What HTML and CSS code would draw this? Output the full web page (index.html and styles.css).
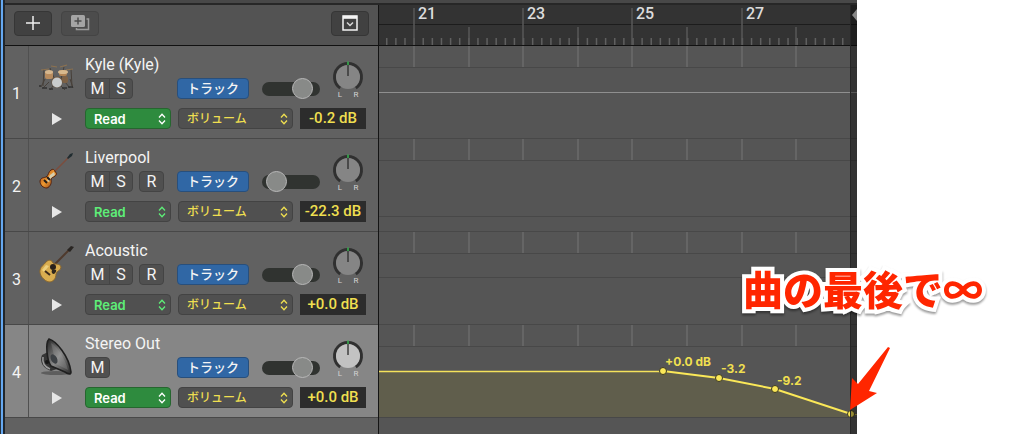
FILE: index.html
```
<!DOCTYPE html>
<html lang="ja">
<head>
  <meta charset="UTF-8" />
  <meta name="viewport" content="width=device-width, initial-scale=1.0"/>
  <title>Tracks</title>
  <link rel="stylesheet" href="styles.css">
</head>
<body>
  <svg class="defs" aria-hidden="true">
    <defs>
      <symbol id="updown" viewBox="0 0 8 12"><path d="M1 4.5 4 1.3 7 4.5M1 7.5 4 10.7 7 7.5" fill="none" stroke="currentColor" stroke-width="1.3"/></symbol>
      <symbol id="knob" viewBox="0 0 32 40">
        <path d="M8.200 28A13.500 13.500 0 1 1 23.800 28" fill="none" stroke="#303030" stroke-width="3"/>
        <circle cx="16" cy="17" r="12" fill="currentColor"/>
        <path d="M16 5v11" stroke="#2b2b2b" stroke-width="1.300"/>
        <path d="M16 1.500v3.500" stroke="#36b14e" stroke-width="1.600"/>
      </symbol>
      <symbol id="bars" viewBox="0 0 479 22">
        <path d="M35 0V22M90 0V22M144 0V22M199 0V22M253 0V22M308 0V22M363 0V22M417 0V22" stroke="#6b6b6b" stroke-width="1.500"/>
      </symbol>
      <linearGradient id="cone" x2="1" y2="1"><stop offset="0" stop-color="#222"/><stop offset=".5" stop-color="#8a8a8a"/><stop offset="1" stop-color="#292929"/></linearGradient>
      <linearGradient id="burst" x2="1" y2="1"><stop offset="0" stop-color="#8d3211"/><stop offset=".5" stop-color="#f09a30"/><stop offset="1" stop-color="#6e250e"/></linearGradient>
    </defs>
  </svg>

  <div class="window">
    <div class="topbar"></div>
    <div class="panes">
      <section class="headers">
        <div class="toolbar">
          <button class="tool" aria-label="Add track"><svg width="16" height="16"><path d="M8 1v14M1 8h14" stroke="#f0f0f0" stroke-width="1.500"/></svg></button>
          <button class="tool dim" aria-label="Duplicate track"><svg width="20" height="16"><path d="M16.500 4H18.500V14.500H6.500V13" fill="none" stroke="#9a9a9a" stroke-width="1.500"/><rect x="1" y="0" width="14" height="12" rx="1.500" fill="#a4a4a4"/><path d="M8 2.500v7M4.500 6h7" stroke="#4c4c4c" stroke-width="1.500"/></svg></button>
          <button class="tool config" aria-label="Header options"><svg width="16" height="16"><path d="M1 1h14v14H1z" fill="none" stroke="#f4f4f4" stroke-width="1.500"/><path d="M1 2.300h14" stroke="#f4f4f4" stroke-width="3"/><path d="M5 7.500l3 3 3-3" fill="none" stroke="#d8d8d8" stroke-width="1.500"/></svg></button>
        </div>

        <article class="track">
          <div class="num">1</div>
          <div class="side">
            <svg class="instrument" width="40" height="40" viewBox="0 0 40 40">
              <g stroke="#474039" stroke-width="1" fill="none"><path d="M7 10l-1 17M34 10l1 17M13 9l5 12M27 8l-3 12M8 20l-4 8M33 20l3 9M12 23l-6 6M28 23l5 6M16 27l-3 4M24 27l4 4"/></g>
              <path d="M4 11l8-1M14 7l6 1M23 8l7-2M29 11l7-1" stroke="#8d7250" stroke-width="1.200"/>
              <rect x="8" y="12" width="8" height="8" rx="2" fill="#b78b5e"/><ellipse cx="12" cy="13" rx="4" ry="2" fill="#d5b68d"/>
              <rect x="22" y="11" width="8" height="6" rx="2" fill="#b28454"/><ellipse cx="26" cy="13" rx="5" ry="2" fill="#d8b98d"/>
              <rect x="25" y="17" width="6" height="7" rx="2" fill="#7d6145"/>
              <circle cx="20" cy="23" r="5.500" fill="#70573d"/><circle cx="20" cy="23.500" r="5" fill="#c9cccd"/>
              <path d="M2 27h2M5 29h5M12 30h4M25 29h5M31 28h5" stroke="#323232" stroke-width="1.500"/>
            </svg>
            <button class="disclose" aria-label="Show lanes"></button>
          </div>
          <div class="body">
            <div class="upper">
              <div>
                <h2>Kyle (Kyle)</h2>
                <div class="line">
                  <div class="flags"><span class="pair"><button>M</button><button>S</button></span></div>
                  <button class="mode">トラック</button>
                  <input class="volume" type="range" min="0" max="100" value="82" aria-label="Volume">
                </div>
              </div>
              <div class="pan"><svg width="32" height="40" role="img" aria-label="Pan"><use href="#knob"/></svg><span>L</span><span>R</span></div>
            </div>
            <div class="line auto">
              <span class="pick read on"><select aria-label="Automation"><option>Read</option></select><svg width="8" height="12"><use href="#updown"/></svg></span>
              <span class="pick param"><select aria-label="Parameter"><option>ボリューム</option></select><svg width="8" height="12"><use href="#updown"/></svg></span>
              <output>-0.2 dB</output>
            </div>
          </div>
        </article>

        <article class="track">
          <div class="num">2</div>
          <div class="side">
            <svg class="instrument" width="40" height="40" viewBox="0 0 40 40">
              <path d="M14 23L32 5" stroke="#7c4d3d" stroke-width="1.500"/>
              <path d="M30 6l3-4 3-1-1 3-4 3z" fill="#202c30"/>
              <path d="M14 18c3-2 4 1 4 2 2 0 2 3 0 4-2 2-4 1-4 4 1 3-1 7-4 8-4 0-7-3-7-7 1-4 4-3 6-4 3-2 2-5 5-7z" fill="url(#burst)" stroke="#54220f"/>
              <path d="M13 23l4-3 1 3-4 3-2 4-2-1 2-4z" fill="#d4ceb0"/>
              <path d="M7 28l3 3M10 25l3 3" stroke="#241c18" stroke-width="2"/>
            </svg>
            <button class="disclose" aria-label="Show lanes"></button>
          </div>
          <div class="body">
            <div class="upper">
              <div>
                <h2>Liverpool</h2>
                <div class="line">
                  <div class="flags"><span class="pair"><button>M</button><button>S</button></span><span class="pair"><button>R</button></span></div>
                  <button class="mode">トラック</button>
                  <input class="volume" type="range" min="0" max="100" value="10" aria-label="Volume">
                </div>
              </div>
              <div class="pan"><svg width="32" height="40" role="img" aria-label="Pan"><use href="#knob"/></svg><span>L</span><span>R</span></div>
            </div>
            <div class="line auto">
              <span class="pick read"><select aria-label="Automation"><option>Read</option></select><svg width="8" height="12"><use href="#updown"/></svg></span>
              <span class="pick param"><select aria-label="Parameter"><option>ボリューム</option></select><svg width="8" height="12"><use href="#updown"/></svg></span>
              <output>-22.3 dB</output>
            </div>
          </div>
        </article>

        <article class="track">
          <div class="num">3</div>
          <div class="side">
            <svg class="instrument" width="40" height="40" viewBox="0 0 40 40">
              <path d="M14 23L33 4" stroke="#4f3a2d" stroke-width="2"/>
              <path d="M30 5l4-4 3 1-4 5z" fill="#292522"/>
              <path d="M9 17C12 14 15 15 16 18 18 20 23 18 24 22 24 26 20 25 19 29 19 34 16 37 12 37 7 36 2 30 3 25 4 21 7 20 9 17z" fill="#d9ad50" stroke="#8b682f"/>
              <path d="M5 25l4-5 3 1-5 6z" fill="#edd07e"/>
              <circle cx="16" cy="22" r="3" fill="#2a211a"/>
              <path d="M17 25c3-1 3 2 0 4-2 0-3-2-2-4z" fill="#2e261d"/>
              <path d="M8 26l5 4" stroke="#3c2a1b" stroke-width="2"/>
            </svg>
            <button class="disclose" aria-label="Show lanes"></button>
          </div>
          <div class="body">
            <div class="upper">
              <div>
                <h2>Acoustic</h2>
                <div class="line">
                  <div class="flags"><span class="pair"><button>M</button><button>S</button></span><span class="pair"><button>R</button></span></div>
                  <button class="mode">トラック</button>
                  <input class="volume" type="range" min="0" max="100" value="82" aria-label="Volume">
                </div>
              </div>
              <div class="pan"><svg width="32" height="40" role="img" aria-label="Pan"><use href="#knob"/></svg><span>L</span><span>R</span></div>
            </div>
            <div class="line auto">
              <span class="pick read"><select aria-label="Automation"><option>Read</option></select><svg width="8" height="12"><use href="#updown"/></svg></span>
              <span class="pick param"><select aria-label="Parameter"><option>ボリューム</option></select><svg width="8" height="12"><use href="#updown"/></svg></span>
              <output>+0.0 dB</output>
            </div>
          </div>
        </article>

        <article class="track selected">
          <div class="num">4</div>
          <div class="side">
            <svg class="instrument" width="40" height="40" viewBox="0 0 40 40">
              <ellipse cx="19" cy="35" rx="15" ry="2" fill="#000" opacity=".3"/>
              <path d="M5 17L11 14 20 31 14 33C6 30 2 24 5 17z" fill="#363636"/>
              <path d="M6 19c-1 6 2 10 7 12" fill="none" stroke="#9b9b9b" stroke-width="1.500"/>
              <path d="M12 1C19 3 32 18 34 34 34 37 31 36 28 34L14 28C10 23 8 5 12 1z" fill="url(#cone)" stroke="#202020" stroke-width="1.600"/>
              <path d="M14 5C20 8 28 20 31 32L19 26z" fill="#aaa" opacity=".25"/>
              <ellipse cx="17" cy="21" rx="3" ry="5" transform="rotate(-28 17 21)" fill="#3d4145"/>
              <circle cx="10" cy="24" r="2" fill="#151515"/>
            </svg>
            <button class="disclose" aria-label="Show lanes"></button>
          </div>
          <div class="body">
            <div class="upper">
              <div>
                <h2>Stereo Out</h2>
                <div class="line">
                  <div class="flags"><span class="pair"><button>M</button></span></div>
                  <button class="mode">トラック</button>
                  <input class="volume" type="range" min="0" max="100" value="82" aria-label="Volume">
                </div>
              </div>
              <div class="pan"><svg width="32" height="40" role="img" aria-label="Pan"><use href="#knob"/></svg><span>L</span><span>R</span></div>
            </div>
            <div class="line auto">
              <span class="pick read on"><select aria-label="Automation"><option>Read</option></select><svg width="8" height="12"><use href="#updown"/></svg></span>
              <span class="pick param"><select aria-label="Parameter"><option>ボリューム</option></select><svg width="8" height="12"><use href="#updown"/></svg></span>
              <output>+0.0 dB</output>
            </div>
          </div>
        </article>
      </section>

      <section class="timeline">
        <div class="ruler">
          <svg width="479" height="40">
            <path d="M0 19.500H479" stroke="#1c1c1c"/>
            <path d="M7 36.500H466" stroke="#606060" stroke-width="7" stroke-dasharray="1.500 7.620"/>
            <path d="M35 3V40M144 3V40M253 3V40M363 3V40" stroke="#585858" stroke-width="1.500"/>
            <path d="M90 22V40M199 22V40M308 22V40M417 22V40" stroke="#585858" stroke-width="1.500"/>
            <text x="39" y="14">21</text>
            <text x="148" y="14">23</text>
            <text x="257" y="14">25</text>
            <text x="367" y="14">27</text>
          </svg>
        </div>
        <div class="lane"><svg width="479" height="92"><use href="#bars" width="479" height="22"/><path d="M0 21.500H479" stroke="#484848"/><path d="M0 46.500H479" stroke="#8f8f8f"/></svg></div>
        <div class="lane"><svg width="479" height="92"><use href="#bars" width="479" height="22"/><path d="M0 21.500H479M0 77.500H479" stroke="#484848"/></svg></div>
        <div class="lane"><svg width="479" height="92"><use href="#bars" width="479" height="22"/><path d="M0 21.500H479M0 45.500H479" stroke="#484848"/></svg></div>
        <div class="lane">
          <svg width="479" height="92">
            <use href="#bars" width="479" height="22"/>
            <path d="M0 21.500H479" stroke="#484848"/>
            <path d="M0 46H284L340 53 396 64 472 89V92H0z" fill="#605e4c"/>
            <path d="M0 46.500H284" stroke="#f5e35b" stroke-width="1.300"/>
            <path d="M284 46L340 53 396 64 472 89" fill="none" stroke="#fbe858" stroke-width="2"/>
            <path d="M472 89.500h7" stroke="#b5a94c"/>
            <g fill="#fbe858" stroke="#3a3820"><circle cx="284" cy="46" r="3.500"/><circle cx="340" cy="53" r="3.500"/><circle cx="396" cy="64" r="3.500"/><circle cx="472" cy="89" r="3.500"/></g>
            <text x="286" y="41">+0.0 dB</text>
            <text x="342" y="48">-3.2</text>
            <text x="398" y="60">-9.2</text>
          </svg>
        </div>
        <div class="song-end"><svg width="6" height="12"><path d="M6 0L1 6l5 6z" fill="#888"/></svg></div>
      </section>
    </div>
  </div>

  <p class="note">曲の最後で∞</p>
  <svg class="arrow" width="44" height="68"><path d="M2 65L4 33 10 39 40 2 42 3 21 46 29 48z" fill="#ff2600"/></svg>
</body>
</html>
```
FILE: styles.css
```
:root {
  --panel: #616161;
  --line: #484848;
  --yellow: #efdf50;
}
* {
  box-sizing: border-box;
}
body {
  margin: 0;
  background: #fff;
  color: #f4f4f4;
  font-family: Roboto, "Noto Sans CJK JP", sans-serif;
  position: relative;
  overflow: hidden;
}
button, select, input {
  font: inherit;
  color: inherit;
  margin: 0;
  padding: 0;
  border: none;
}
svg {
  display: block;
}
.defs {
  position: absolute;
  width: 0;
  height: 0;
}
.window {
  display: flex;
  flex-direction: column;
  min-height: 100vh;
  margin-right: 167px;
  padding-left: 5px;
  background: linear-gradient(to right, #26323e 1px, #66a9f2 1px, #66a9f2 3px, #20262c 3px, #20262c 5px, var(--panel) 5px);
}
.topbar {
  height: 5px;
  background: #484848;
  border-bottom: 2px solid #272727;
}
.panes {
  flex: 1;
  display: flex;
}
.headers {
  flex: 0 0 374px;
  background: var(--panel);
  border-right: 1px solid #141414;
}
.toolbar {
  display: flex;
  align-items: center;
  gap: 9px;
  height: 41px;
  padding: 0 9px 4px;
  background: #535353;
  border-bottom: 1px solid #111;
}
.tool {
  display: flex;
  align-items: center;
  justify-content: center;
  width: 38px;
  height: 25px;
  background: #414141;
  border: 1px solid #363636;
  border-radius: 4px;
}
.tool.dim {
  background: #4c4c4c;
  border-color: #444;
}
.config {
  margin-left: auto;
}

/* track headers */
.track {
  display: flex;
  height: 93px;
  border-bottom: 1px solid var(--line);
}
.track.selected {
  background: #868686;
}
.num {
  flex: 0 0 24px;
  display: flex;
  align-items: center;
  justify-content: center;
  padding-top: 2px;
  border-right: 1px solid #505050;
  font-size: 16px;
}
.side {
  flex: 0 0 56px;
  display: flex;
  flex-direction: column;
  align-items: center;
  justify-content: space-between;
  padding: 13px 0;
}
.disclose {
  width: 10px;
  height: 12px;
  background: #e6e6e6;
  clip-path: polygon(0 0, 100% 50%, 0 100%);
}
.body {
  flex: 1;
  padding-top: 8px;
}
.upper {
  display: flex;
  gap: 12px;
}
h2 {
  margin: 0 0 2px;
  font-size: 16px;
  font-weight: 400;
  line-height: 22px;
}
.line {
  display: flex;
  align-items: center;
}
.flags {
  display: flex;
  gap: 6px;
  width: 92px;
}
.pair {
  display: flex;
  height: 21px;
  background: #505050;
  border: 1px solid #444;
  border-radius: 4px;
}
.pair button {
  width: 23px;
  background: none;
  font-size: 16px;
  line-height: 19px;
}
.pair button + button {
  border-left: 1px solid #444;
}
.mode {
  width: 72px;
  height: 21px;
  margin-right: 13px;
  background: #3067a5;
  border: 1px solid #284f7c;
  border-radius: 4px;
  font-size: 13px;
  font-weight: 500;
  line-height: 19px;
}
.volume {
  appearance: none;
  width: 58px;
  height: 14px;
  background: #303330;
  border-radius: 7px;
}
.volume::-webkit-slider-thumb {
  appearance: none;
  width: 21px;
  height: 21px;
  background: #888a88;
  border: 1px solid #b8b8b8;
  border-radius: 50%;
}
.pan {
  display: grid;
  grid-template-columns: 1fr 1fr;
  justify-items: center;
  align-content: start;
  width: 32px;
  padding-top: 6px;
  color: #d2d2d2;
  font-size: 8px;
  line-height: 10px;
}
.pan svg {
  grid-column: 1 / 3;
  height: 40px;
  margin-bottom: -10px;
  color: #858585;
}
.selected .pan svg {
  color: #c2c2c2;
}
.auto {
  gap: 7px;
  margin-top: 8px;
  font-size: 13px;
}
.pick {
  position: relative;
  color: #5eee78;
}
.pick select {
  appearance: none;
  display: block;
  width: 100%;
  height: 21px;
  padding: 0 8px;
  background: #505050;
  border: 1px solid #434343;
  border-radius: 4px;
}
.pick svg {
  position: absolute;
  right: 5px;
  top: 5px;
  pointer-events: none;
}
.read {
  width: 86px;
  font-family: Inter, sans-serif;
  font-weight: 600;
}
.read.on {
  color: #fff;
}
.read.on select {
  background: #2e8b3e;
  border-color: #26662f;
}
.param {
  width: 115px;
  color: var(--yellow);
  font-size: 12px;
  font-weight: 500;
}
output {
  width: 66px;
  height: 21px;
  background: #2c2c2c;
  color: var(--yellow);
  font-size: 15px;
  font-weight: 500;
  line-height: 21px;
  text-align: center;
}

/* timeline */
.timeline {
  position: relative;
  flex: 1;
  min-width: 0;
  overflow: hidden;
  background: #555;
}
.ruler {
  height: 41px;
  background: #333;
  border-bottom: 1px solid #111;
}
.ruler text {
  fill: #dcdcdc;
  font-size: 16px;
  font-weight: 500;
}
.lane {
  height: 93px;
  border-bottom: 1px solid var(--line);
}
.lane text {
  fill: var(--yellow);
  font-family: Inter, sans-serif;
  font-size: 12px;
  font-weight: 700;
}
.song-end {
  position: absolute;
  top: 0;
  right: 0;
  bottom: 0;
  width: 7px;
  padding-top: 4px;
  background: rgba(0, 0, 0, 0.4);
  border-left: 1px solid #262626;
}

/* callout */
.note {
  position: absolute;
  right: 41px;
  top: 258px;
  margin: 0;
  color: #ff2600;
  font-family: "Noto Sans CJK JP", sans-serif;
  font-size: 40px;
  font-weight: 900;
  line-height: 60px;
  white-space: nowrap;
  -webkit-text-stroke: 8px #fff;
  paint-order: stroke fill;
  stroke-linejoin: round;
  filter: drop-shadow(0 2px 1px rgba(0, 0, 0, 0.4));
}
.arrow {
  position: absolute;
  right: 132px;
  top: 345px;
}
```
